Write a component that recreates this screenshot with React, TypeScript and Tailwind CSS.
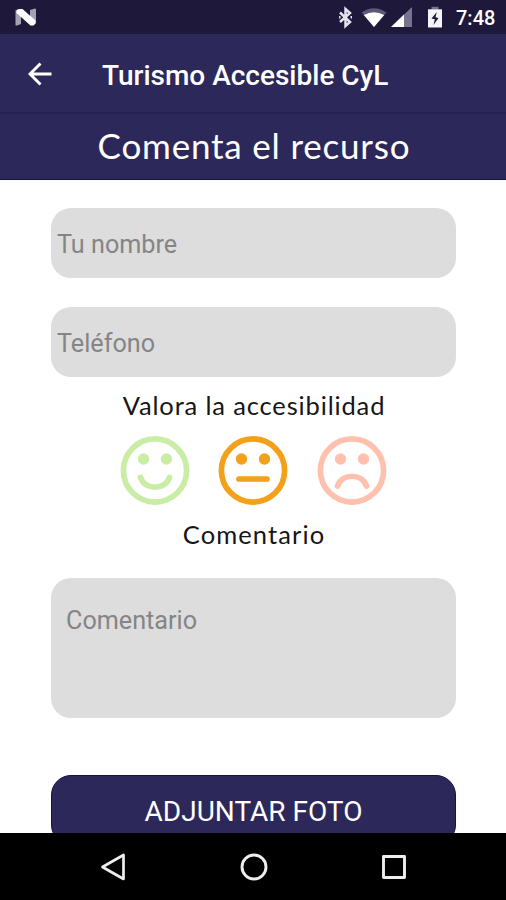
import type { ReactNode } from "react";

function StatusBar() {
  return (
    <div className="flex h-[34px] shrink-0 items-center bg-[#1e193b] pl-[14px] pr-[11px]">
      <svg className="h-[20px] w-[24px]" viewBox="0 0 24 20">
        <path d="M1.500 3 7 6V17l-4 1.500H1.500zM16 3l5-1.500 1 .5V16l-6-2z" fill="#a5a1b3" />
        <path d="M2.500 3 5 2H8.500L21.500 13.500v3L19.500 18.500H16.500L2.500 6z" fill="#fff" />
      </svg>
      <div className="ml-auto flex items-center">
        <svg className="h-[24px] w-[18px]" viewBox="0 0 18 24" fill="none" stroke="#e4e2eb" strokeWidth="2.500">
          <path d="M3 7.500 13 17l-4.500 4v-17L13 8 3 17" />
          <path d="M2 12.300h1.500M13.500 12.300H15" />
        </svg>
        <svg className="ml-[6px] h-[22px] w-[26px]" viewBox="0 0 26 22">
          <path d="M.5 6.500Q13-2 25.500 6.500L13 21z" fill="#5d5876" />
          <path d="M2.800 9Q13 3.500 23.200 9L13 21z" fill="#fff" />
        </svg>
        <svg className="ml-[4px] h-[22px] w-[22px]" viewBox="0 0 22 22">
          <path d="M0 21 21 1v20z" fill="#77728d" />
          <path d="M0 21 13 8.500V21z" fill="#fff" />
        </svg>
        <svg className="ml-[14px] h-[22px] w-[16px]" viewBox="0 0 16 22">
          <path d="M4.500.8h7v3h-7z" fill="#77728d" />
          <path d="M1 3.300h14V21.500H1z" fill="#f4f3f7" />
          <path d="M9.800 6 4.500 12.500l3.300.8L6.500 19 11.500 12l-3-.8z" fill="#1e193b" />
        </svg>
        <span className="ml-[13px] mt-px w-[39px] whitespace-nowrap text-[20px] font-medium leading-none text-white">7:48</span>
      </div>
    </div>
  );
}

function Face({ color, mouth }: { color: string; mouth: string }) {
  return (
    <svg className="size-[70px]" viewBox="0 0 70 70" fill="none" stroke={color} strokeWidth="5.700" strokeLinecap="round">
      <circle cx="35" cy="35.500" r="31.600" />
      <circle cx="23.500" cy="24" r="5.700" fill={color} stroke="none" />
      <circle cx="46.500" cy="24" r="5.700" fill={color} stroke="none" />
      <path d={mouth} />
    </svg>
  );
}

function Field({ children }: { children: ReactNode }) {
  return (
    <div className="flex h-[70px] shrink-0 items-center rounded-[20px] bg-[#dddddd] pl-[6px] pt-[4px] text-[25.2px] leading-none text-[#858585]">
      {children}
    </div>
  );
}

export default function App() {
  return (
    <div className="flex h-[900px] w-[506px] flex-col overflow-hidden bg-white font-['Roboto',sans-serif]">
      <StatusBar />
      <header className="flex h-[80px] shrink-0 items-center border-b-2 border-[#25204d] bg-[#2d285a] pl-[28px] text-white">
        <svg className="mt-px h-[24px] w-[24px]" viewBox="0 0 24 24" fill="none" stroke="currentColor" strokeWidth="2.900">
          <path d="M23.500 12H2.500M12.500 1.500 2 12l10.500 10.500" />
        </svg>
        <h1 className="ml-[50px] mt-[6px] whitespace-nowrap text-[28px] font-medium leading-none">Turismo Accesible CyL</h1>
      </header>
      <div className="flex h-[66px] shrink-0 items-center justify-center border-b border-[#151047] bg-[#2d285a] pb-[3px] pl-[2px] font-['Lato',sans-serif] text-[35px] leading-none text-white">
        <h2 className="whitespace-nowrap tracking-[0.8px]">Comenta el recurso</h2>
      </div>
      <main className="flex min-h-0 flex-1 flex-col overflow-hidden pl-[51px] pr-[50px] pt-[28px]">
        <Field>Tu nombre</Field>
        <div className="h-[29px] shrink-0" />
        <Field>Teléfono</Field>
        <h3 className="mt-[13px] h-[30px] shrink-0 whitespace-nowrap pl-[1px] text-center font-['Lato',sans-serif] text-[25.5px] leading-[30px] tracking-[0.85px] text-[#161616]">Valora la accesibilidad</h3>
        <div className="mt-[15px] flex h-[70px] shrink-0 justify-center gap-[28.5px] pr-[1px]">
          <Face color="#c9eda5" mouth="M20.500 42.500C25 55.500 45 55.500 49.500 42.500" />
          <Face color="#f3a01b" mouth="M21 44H49" />
          <Face color="#ffc0ad" mouth="M20.500 51C25 38 45 38 49.500 51" />
        </div>
        <h3 className="mt-[14px] h-[30px] shrink-0 whitespace-nowrap pl-[1px] text-center font-['Lato',sans-serif] text-[25.5px] leading-[30px] tracking-[1.1px] text-[#161616]">Comentario</h3>
        <div className="mt-[29px] h-[140px] shrink-0 rounded-[20px] bg-[#dddddd] pl-[15px] pt-[30px] text-[25.2px] leading-[26px] text-[#858585]">Comentario</div>
        <div className="mt-[57px] flex h-[70px] shrink-0 items-center justify-center rounded-[20px] border border-[#151047] bg-[#2d285a] pt-[4px] text-[28px] leading-none text-white">ADJUNTAR FOTO</div>
      </main>
      <nav className="flex h-[67px] shrink-0 items-center justify-between bg-black pl-[100px] pr-[99px]">
        <svg className="h-[28px] w-[26px]" viewBox="0 0 26 28" fill="none" stroke="#eee" strokeWidth="2.700" strokeLinejoin="round">
          <path d="M2.500 14 23.500 2v24z" />
        </svg>
        <svg className="size-[28px]" viewBox="0 0 28 28" fill="none" stroke="#eee" strokeWidth="2.900">
          <circle cx="14" cy="14" r="12" />
        </svg>
        <svg className="size-[26px]" viewBox="0 0 26 26" fill="none" stroke="#eee" strokeWidth="2.900" strokeLinejoin="round">
          <path d="M2.500 2.500h21v21h-21z" />
        </svg>
      </nav>
    </div>
  );
}
